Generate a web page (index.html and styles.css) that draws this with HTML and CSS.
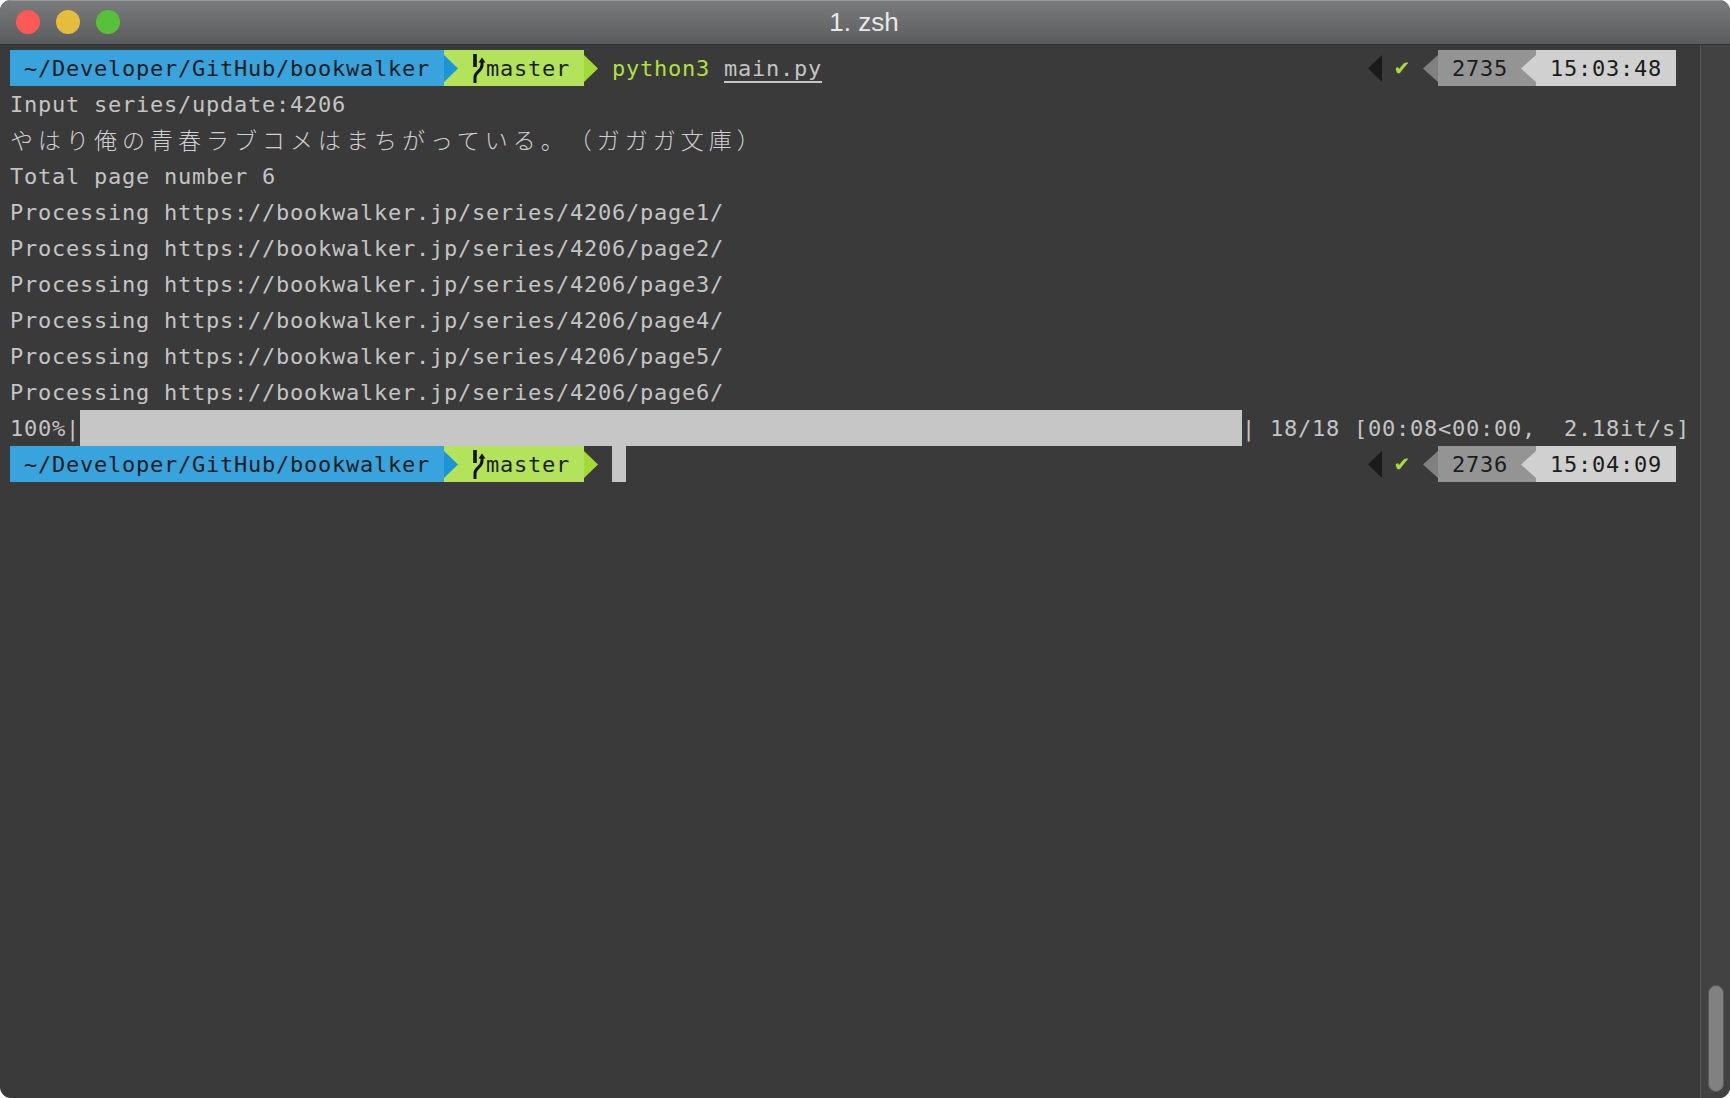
FILE: index.html
```html
<!DOCTYPE html>
<html lang="ja">
<head>
<meta charset="utf-8">
<title>1. zsh</title>
<link rel="stylesheet" href="styles.css">
</head>
<body>
<div class="window">
  <header class="titlebar">
    <div class="lights">
      <span class="light red"></span>
      <span class="light yellow"></span>
      <span class="light green"></span>
    </div>
    <div class="title">1. zsh</div>
  </header>
  <div class="main">
    <div class="term">
      <div class="row prompt">
        <span class="seg blue">~/Developer/GitHub/bookwalker</span>
        <span class="seg lime">
          <i class="arrow blue-arrow"></i>
          <svg class="branch" viewBox="0 0 14 30" width="14" height="30"><path d="M3 1V14" fill="none" stroke="#111" stroke-width="3.6"/><path d="M3 30V24C3 19 10 18 10 12V8" fill="none" stroke="#111" stroke-width="3"/><path d="M6.5 9.5L10 4.5L13.5 9.5Z" fill="#111"/></svg>
          <span>master</span>
        </span>
        <i class="arrow lime-arrow"></i>
        <span class="cmd">python3</span>
        <span class="file">main.py</span>
        <span class="right">
          <i class="rarrow black-arrow"></i>
          <span class="check">✔</span>
          <i class="rarrow grey-arrow"></i>
          <span class="seg grey">2735</span>
          <span class="seg light-seg"><i class="rarrow white-arrow"></i>15:03:48</span>
        </span>
      </div>
      <div class="row">Input series/update:4206</div>
      <div class="row cjk">やはり俺の青春ラブコメはまちがっている。（ガガガ文庫）</div>
      <div class="row">Total page number 6</div>
      <div class="row">Processing https://bookwalker.jp/series/4206/page1/</div>
      <div class="row">Processing https://bookwalker.jp/series/4206/page2/</div>
      <div class="row">Processing https://bookwalker.jp/series/4206/page3/</div>
      <div class="row">Processing https://bookwalker.jp/series/4206/page4/</div>
      <div class="row">Processing https://bookwalker.jp/series/4206/page5/</div>
      <div class="row">Processing https://bookwalker.jp/series/4206/page6/</div>
      <div class="row progress">
        <span>100%|</span><span class="bar"></span><span>| 18/18 [00:08&lt;00:00,  2.18it/s]</span>
      </div>
      <div class="row prompt">
        <span class="seg blue">~/Developer/GitHub/bookwalker</span>
        <span class="seg lime">
          <i class="arrow blue-arrow"></i>
          <svg class="branch" viewBox="0 0 14 30" width="14" height="30"><path d="M3 1V14" fill="none" stroke="#111" stroke-width="3.6"/><path d="M3 30V24C3 19 10 18 10 12V8" fill="none" stroke="#111" stroke-width="3"/><path d="M6.5 9.5L10 4.5L13.5 9.5Z" fill="#111"/></svg>
          <span>master</span>
        </span>
        <i class="arrow lime-arrow"></i>
        <span class="cursor"></span>
        <span class="right">
          <i class="rarrow black-arrow"></i>
          <span class="check">✔</span>
          <i class="rarrow grey-arrow"></i>
          <span class="seg grey">2736</span>
          <span class="seg light-seg"><i class="rarrow white-arrow"></i>15:04:09</span>
        </span>
      </div>
    </div>
    <aside class="gutter"><div class="thumb"></div></aside>
  </div>
</div>
</body>
</html>
```

FILE: styles.css
```css
* { box-sizing: border-box; }
html, body { margin: 0; height: 100%; background: #fff; }
body { overflow: hidden; }

.window {
  width: 1730px;
  height: 1098px;
  display: flex;
  flex-direction: column;
  border-radius: 11px;
  overflow: hidden;
  background: #3a3a3a;
}

.titlebar {
  height: 45px;
  flex: none;
  position: relative;
  display: flex;
  align-items: center;
  justify-content: center;
  background: linear-gradient(#7a7b7c, #5b5c5d);
  border-top: 1px solid #9a9a9a;
  border-bottom: 1px solid #333;
}
.lights {
  position: absolute;
  left: 16px;
  top: 9px;
  display: flex;
  gap: 16px;
}
.light { width: 24px; height: 24px; border-radius: 50%; }
.red { background: #fd5a55; }
.yellow { background: #e5bc3c; }
.green { background: #58c13a; }
.title {
  font-family: "Liberation Sans", Arial, sans-serif;
  font-size: 26px;
  color: #e8e8e8;
  margin-right: 2px;
}

.main { flex: 1; display: flex; min-height: 0; }
.term {
  flex: 1;
  min-width: 0;
  padding: 5px 0 0 10px;
  font-family: "DejaVu Sans Mono", monospace;
  font-size: 22px;
  letter-spacing: 0.756px;
  color: #c4c4c4;
}
.row { height: 36px; line-height: 37px; display: flex; white-space: pre; }
.cjk {
  font-family: "Noto Sans CJK JP", sans-serif;
  font-size: 23px;
  font-weight: 300;
  letter-spacing: 5px;
  line-height: 34px;
  text-spacing-trim: space-all;
  color: #cfcfcf;
}

.seg { display: flex; height: 36px; color: #1c1c1c; position: relative; }
.blue { background: #38a3dd; width: 434px; padding-left: 14px; }
.lime { background: #b3e35a; width: 140px; align-items: center; padding-left: 28px; }
.grey { background: #949494; width: 98px; padding-left: 14px; }
.light-seg { background: #d0d0d0; width: 140px; padding-left: 14px; }

.arrow { width: 14px; height: 27px; flex: none; clip-path: polygon(0 0, 100% 50%, 0 100%); }
.blue-arrow { position: absolute; left: 0; top: 5px; background: #1c94d8; }
.lime-arrow { background: #a0dc35; margin-top: 5px; margin-right: 14px; }
.branch { flex: none; }

.cmd { color: #b0e040; }
.file {
  margin-left: 14px;
  height: 33px;
  border-bottom: 2px solid #c4c4c4;
}
.cursor { width: 14px; height: 36px; background: #c6c6c6; }

.right { margin-left: auto; display: flex; margin-right: 24px; }
.rarrow { width: 14px; height: 27px; flex: none; clip-path: polygon(100% 0, 0 50%, 100% 100%); }
.black-arrow { background: #1a1a1a; margin-top: 5px; }
.check {
  font-family: "DejaVu Sans", sans-serif;
  font-size: 20px;
  letter-spacing: 0;
  color: #a6dc3c;
  width: 40px;
  margin-right: 1px;
  text-align: center;
}
.grey-arrow { background: #808080; margin-top: 5px; width: 15px; }
.white-arrow { position: absolute; left: -15px; top: 5px; width: 15px; background: #d0d0d0; }

.bar { width: 1162px; height: 36px; background: #c6c6c6; }

.gutter {
  width: 30px;
  flex: none;
  display: flex;
  flex-direction: column;
  justify-content: flex-end;
  align-items: center;
  background: #424242;
  border-left: 1px solid #565656;
  padding-bottom: 6px;
}
.thumb {
  width: 16px;
  height: 107px;
  border-radius: 8px;
  background: #818181;
  border: 1px solid #5a5a5a;
}
```
